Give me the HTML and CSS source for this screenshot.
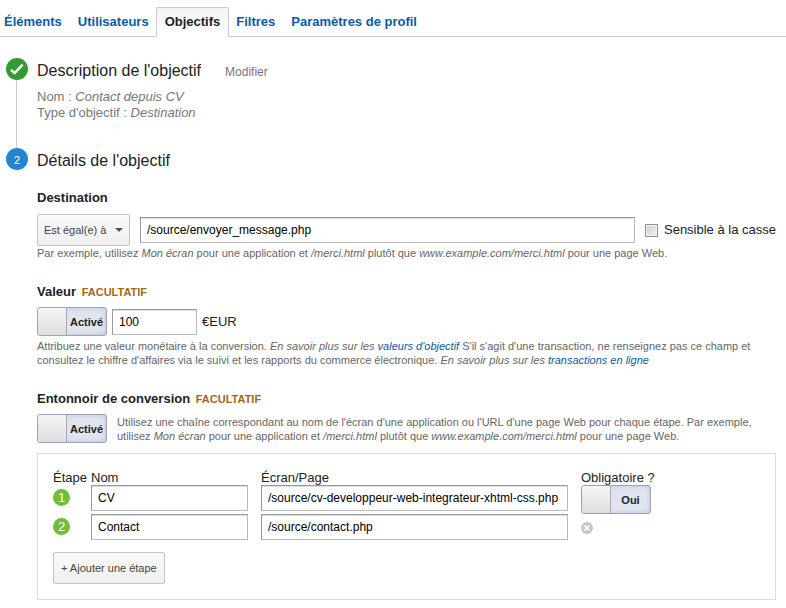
FILE: index.html
```html
<!DOCTYPE html>
<html lang="fr">
<head>
<meta charset="utf-8">
<title>Objectifs</title>
<link rel="stylesheet" href="styles.css">
</head>
<body>
<nav class="tabs">
  <a href="#">Éléments</a>
  <a href="#">Utilisateurs</a>
  <a href="#" class="active" aria-current="page">Objectifs</a>
  <a href="#">Filtres</a>
  <a href="#">Paramètres de profil</a>
</nav>
<main>
  <section class="step">
    <div class="rail">
      <svg class="badge" viewBox="0 0 22 22" aria-hidden="true"><circle cx="11" cy="11" r="11" fill="#339b33"/><path d="M5 11.8l3.6 3.2 8-8.4" fill="none" stroke="#fff" stroke-width="2.4"/></svg>
      <div class="line"></div>
    </div>
    <div class="content">
      <div class="title-row">
        <h2>Description de l'objectif</h2>
        <a href="#" class="edit">Modifier</a>
      </div>
      <div class="summary">
        <p>Nom : <em>Contact depuis CV</em></p>
        <p>Type d'objectif : <em>Destination</em></p>
      </div>
    </div>
  </section>

  <section class="step">
    <div class="rail"><span class="badge number">2</span></div>
    <div class="content">
      <h2>Détails de l'objectif</h2>

      <div class="field">
        <h3><label for="destination">Destination</label></h3>
        <div class="row destination-row">
          <span class="select"><select aria-label="Type de correspondance"><option>Est égal(e) à</option></select></span>
          <input type="text" id="destination" class="grow" value="/source/envoyer_message.php">
          <label class="check"><input type="checkbox"> Sensible à la casse</label>
        </div>
        <p class="hint">Par exemple, utilisez <em>Mon écran</em> pour une application et <em>/merci.html</em> plutôt que <em>www.example.com/merci.html</em> pour une page Web.</p>
      </div>

      <div class="field">
        <h3><label for="value">Valeur</label> <span class="optional">FACULTATIF</span></h3>
        <div class="row value-row">
          <button type="button" class="toggle" aria-pressed="true"><span class="knob"></span><span class="state">Activé</span></button>
          <input type="text" id="value" class="amount" value="100">
          <span>€EUR</span>
        </div>
        <p class="hint value-hint">Attribuez une valeur monétaire à la conversion. <em>En savoir plus sur les <a href="#">valeurs d'objectif</a></em> S'il s'agit d'une transaction, ne renseignez pas ce champ et consultez le chiffre d'affaires via le suivi et les rapports du commerce électronique. <em>En savoir plus sur les <a href="#">transactions en ligne</a></em></p>
      </div>

      <div class="field">
        <h3>Entonnoir de conversion <span class="optional">FACULTATIF</span></h3>
        <div class="row">
          <button type="button" class="toggle" aria-pressed="true"><span class="knob"></span><span class="state">Activé</span></button>
          <p class="hint">Utilisez une chaîne correspondant au nom de l'écran d'une application ou l'URL d'une page Web pour chaque étape. Par exemple, utilisez <em>Mon écran</em> pour une application et <em>/merci.html</em> plutôt que <em>www.example.com/merci.html</em> pour une page Web.</p>
        </div>
        <div class="funnel">
          <table>
            <colgroup><col class="col-step"><col class="col-name"><col class="col-page"><col></colgroup>
            <thead>
              <tr><th>Étape</th><th id="name">Nom</th><th id="page">Écran/Page</th><th>Obligatoire ?</th></tr>
            </thead>
            <tbody>
              <tr>
                <td><span class="count">1</span></td>
                <td><input type="text" aria-labelledby="name" value="CV"></td>
                <td><input type="text" aria-labelledby="page" value="/source/cv-developpeur-web-integrateur-xhtml-css.php"></td>
                <td><button type="button" class="toggle" aria-pressed="true"><span class="knob"></span><span class="state">Oui</span></button></td>
              </tr>
              <tr>
                <td><span class="count">2</span></td>
                <td><input type="text" aria-labelledby="name" value="Contact"></td>
                <td><input type="text" aria-labelledby="page" value="/source/contact.php"></td>
                <td><button type="button" class="remove" aria-label="Supprimer"><svg viewBox="0 0 12 12"><circle cx="6" cy="6" r="6" fill="#c6c6c6"/><path d="M3.5 3.5l5 5M8.5 3.5l-5 5" stroke="#fff" stroke-width="1.6"/></svg></button></td>
              </tr>
            </tbody>
          </table>
          <button type="button" class="add">+ Ajouter une étape</button>
        </div>
      </div>
    </div>
  </section>
</main>
</body>
</html>
```
FILE: styles.css
```css
* { box-sizing: border-box; }
body, h2, h3, p { margin: 0; }
body {
  background: #fff;
  color: #222;
  font: 13px/16px "Liberation Sans", Arial, sans-serif;
}
input, select, button { font: inherit; color: inherit; margin: 0; }
a { color: #0b5aa6; text-decoration: none; }

.tabs {
  display: flex;
  align-items: flex-end;
  gap: 16px;
  height: 37px;
  padding-left: 4px;
  border-bottom: 1px solid #ccc;
  font-weight: bold;
}
.tabs a { padding: 6px 0; }
.tabs .active {
  margin: 0 -9px -1px;
  padding: 6px 8px;
  border: 1px solid #ccc;
  border-bottom-color: #fff;
  border-radius: 2px 2px 0 0;
  background: linear-gradient(#f3f3f3, #fff);
  color: #222;
}

main { padding: 21px 10px 8px 6px; }
.step { display: flex; gap: 9px; }
.rail {
  display: flex;
  flex: none;
  flex-direction: column;
  width: 22px;
}
.badge { width: 22px; height: 22px; flex: none; }
.number {
  border-radius: 50%;
  background: #2385d0;
  color: #fff;
  font-size: 11px;
  line-height: 24px;
  text-align: center;
}
.line { flex: 1; width: 1px; margin-left: 10px; background: #ccc; }
.content { flex: 1; min-width: 0; }
h2 { font-size: 16px; font-weight: normal; line-height: 26px; }
.title-row { display: flex; align-items: baseline; gap: 24px; }
.edit { color: #777; font-size: 12px; }
.summary { padding: 5px 0 27px; color: #777; }

.field { margin-top: 24px; }
h2 + .field { margin-top: 16px; }
h3 { font-size: 13px; line-height: 16px; }
.optional { margin-left: 2px; color: #a5670f; font-size: 11px; }
.row { display: flex; align-items: center; gap: 10px; margin-top: 7px; }
.destination-row { margin-top: 8px; }
.value-row { gap: 5px; }

input[type="text"] {
  width: 100%;
  height: 26px;
  padding: 0 6px;
  border: 1px solid #bbb;
  border-top-color: #999;
  border-left-color: #999;
  background: #fff;
  box-shadow: inset 0 1px #ddd;
  color: #000;
  font-size: 12px;
}
input.grow { flex: 1; min-width: 0; width: auto; }
input.amount { width: 85px; }

.select { position: relative; flex: none; }
.select::after {
  content: "";
  position: absolute;
  top: 14px;
  right: 7px;
  border: 4px solid transparent;
  border-top-color: #555;
  border-bottom: 0;
  pointer-events: none;
}
select, .add {
  height: 32px;
  border: 1px solid #c4c4c4;
  border-radius: 2px;
  background: linear-gradient(#fafafa, #f0f0f0);
  color: #444;
  font-size: 11px;
}
select { display: block; width: 93px; padding: 0 0 0 6px; appearance: none; }
.check { display: flex; align-items: center; gap: 6px; white-space: nowrap; }
.check input {
  width: 13px;
  height: 13px;
  border: 1px solid #8e8f8f;
  outline: 1px solid #f4f4f4;
  outline-offset: -2px;
  background: linear-gradient(135deg, #c8cbcf, #f4f4f4);
  appearance: none;
}

.hint { color: #666; font-size: 11px; line-height: 14px; }
.value-hint { margin-top: 3px; }

.toggle {
  display: flex;
  flex: none;
  width: 70px;
  height: 29px;
  padding: 0;
  border: 1px solid #98a3bd;
  border-radius: 3px;
  background: #dfe4ef;
  box-shadow: inset 0 0 5px #b9c3da;
  overflow: hidden;
}
.knob {
  width: 29px;
  height: 27px;
  border-right: 1px solid #aaa;
  background: linear-gradient(#f6f6f6, #ddd);
}
.state { flex: 1; font-size: 11px; font-weight: bold; line-height: 28px; text-align: center; }

.funnel { margin-top: 10px; padding: 16px 15px 15px; border: 1px solid #ddd; }
table { width: 100%; border-collapse: collapse; table-layout: fixed; }
.col-step { width: 38px; }
.col-name { width: 170px; }
.col-page { width: 320px; }
th { padding: 0; font-weight: normal; line-height: 15px; text-align: left; white-space: nowrap; }
td { height: 29px; padding: 0; vertical-align: top; }
td:nth-child(2), td:nth-child(3) { padding-right: 13px; }
.count {
  display: block;
  width: 17px;
  height: 17px;
  margin-top: 4px;
  border-radius: 50%;
  background: #6fbe36;
  color: #fff;
  font-size: 13px;
  line-height: 17px;
  text-align: center;
}
.remove { display: block; width: 12px; height: 12px; margin-top: 8px; padding: 0; border: 0; background: none; }
.remove svg { display: block; }
.add { display: block; margin-top: 9px; padding: 0 7px; }
```
